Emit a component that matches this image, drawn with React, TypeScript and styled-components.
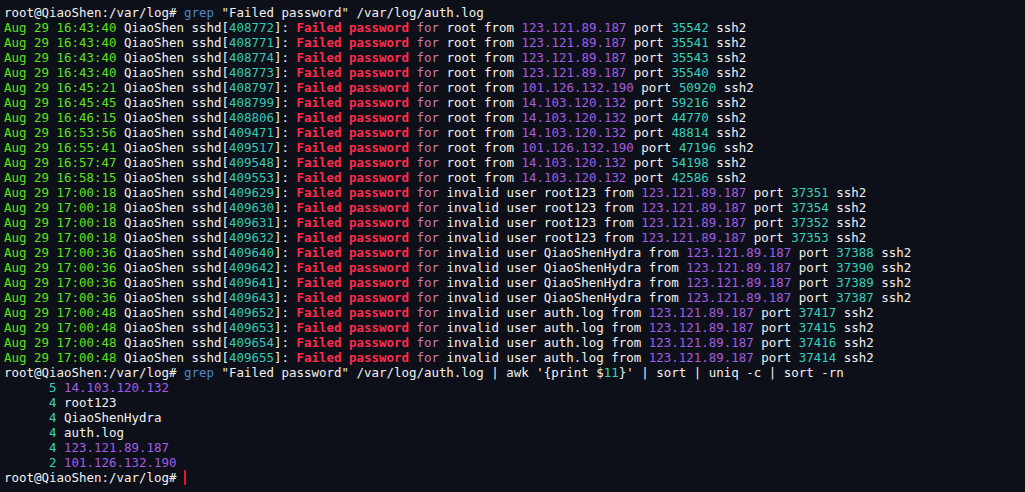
import React from "react";
import styled, { createGlobalStyle } from "styled-components";

const Global = createGlobalStyle`
  html, body { margin: 0; padding: 0; background: #0e1019; height: 100%; }
  #root { min-height: 100%; }
`;

const palette = {
  fg: "#f2f2f2",
  cmd: "#4f85c8",
  time: "#5ae21c",
  pid: "#34c8b6",
  fail: "#ff2b4c",
  kw: "#c77cae",
  ip: "#a35ce4",
  num: "#36d0bb",
} as const;

type Tone = keyof typeof palette;

const Terminal = styled.div`
  box-sizing: border-box;
  width: 1025px;
  height: 492px;
  overflow: hidden;
  background: #0e1019;
  padding: 5px 4px;
  font-family: "DejaVu Sans Mono", "Liberation Mono", monospace;
  font-size: 12.46px;
  color: ${palette.fg};
  display: flex;
  flex-direction: column;
`;

const Line = styled.div`
  height: 15px;
  line-height: 15px;
  white-space: pre;
  display: flex;
  align-items: center;
`;

const Seg = styled.span<{ $t?: Tone; $bold?: boolean }>`
  color: ${(p) => palette[p.$t ?? "fg"]};
  font-weight: ${(p) => (p.$bold ? 700 : 400)};
`;

const Cursor = styled.span`
  display: inline-block;
  width: 2px;
  height: 15px;
  background: #e8122a;
`;

type Row = [string, string, string, string, string];

const rows: Row[] = [
  ["16:43:40", "408772", "root", "123.121.89.187", "35542"],
  ["16:43:40", "408771", "root", "123.121.89.187", "35541"],
  ["16:43:40", "408774", "root", "123.121.89.187", "35543"],
  ["16:43:40", "408773", "root", "123.121.89.187", "35540"],
  ["16:45:21", "408797", "root", "101.126.132.190", "50920"],
  ["16:45:45", "408799", "root", "14.103.120.132", "59216"],
  ["16:46:15", "408806", "root", "14.103.120.132", "44770"],
  ["16:53:56", "409471", "root", "14.103.120.132", "48814"],
  ["16:55:41", "409517", "root", "101.126.132.190", "47196"],
  ["16:57:47", "409548", "root", "14.103.120.132", "54198"],
  ["16:58:15", "409553", "root", "14.103.120.132", "42586"],
  ["17:00:18", "409629", "invalid user root123", "123.121.89.187", "37351"],
  ["17:00:18", "409630", "invalid user root123", "123.121.89.187", "37354"],
  ["17:00:18", "409631", "invalid user root123", "123.121.89.187", "37352"],
  ["17:00:18", "409632", "invalid user root123", "123.121.89.187", "37353"],
  ["17:00:36", "409640", "invalid user QiaoShenHydra", "123.121.89.187", "37388"],
  ["17:00:36", "409642", "invalid user QiaoShenHydra", "123.121.89.187", "37390"],
  ["17:00:36", "409641", "invalid user QiaoShenHydra", "123.121.89.187", "37389"],
  ["17:00:36", "409643", "invalid user QiaoShenHydra", "123.121.89.187", "37387"],
  ["17:00:48", "409652", "invalid user auth.log", "123.121.89.187", "37417"],
  ["17:00:48", "409653", "invalid user auth.log", "123.121.89.187", "37415"],
  ["17:00:48", "409654", "invalid user auth.log", "123.121.89.187", "37416"],
  ["17:00:48", "409655", "invalid user auth.log", "123.121.89.187", "37414"],
];

const counts: { n: string; v: string; ip: boolean }[] = [
  { n: "5", v: "14.103.120.132", ip: true },
  { n: "4", v: "root123", ip: false },
  { n: "4", v: "QiaoShenHydra", ip: false },
  { n: "4", v: "auth.log", ip: false },
  { n: "4", v: "123.121.89.187", ip: true },
  { n: "2", v: "101.126.132.190", ip: true },
];

const Prompt = () => <Seg>root@QiaoShen:/var/log# </Seg>;

export default function App() {
  return (
    <>
      <Global />
      <Terminal>
        <Line>
          <Prompt />
          <Seg $t="cmd">grep</Seg>
          <Seg> "Failed password" /var/log/auth.log</Seg>
        </Line>
        {rows.map(([time, pid, user, ip, port], i) => (
          <Line key={i}>
            <Seg $t="time">Aug 29 {time}</Seg>
            <Seg> QiaoShen sshd[</Seg>
            <Seg $t="pid">{pid}</Seg>
            <Seg>]: </Seg>
            <Seg $t="fail" $bold>
              Failed password
            </Seg>
            <Seg> </Seg>
            <Seg $t="kw">for</Seg>
            <Seg> {user} from </Seg>
            <Seg $t="ip">{ip}</Seg>
            <Seg> port </Seg>
            <Seg $t="num">{port}</Seg>
            <Seg> ssh2</Seg>
          </Line>
        ))}
        <Line>
          <Prompt />
          <Seg $t="cmd">grep</Seg>
          <Seg> "Failed password" /var/log/auth.log | awk '{"{"}print $</Seg>
          <Seg $t="num">11</Seg>
          <Seg>{"}"}' | sort | uniq -c | sort -rn</Seg>
        </Line>
        {counts.map((c, i) => (
          <Line key={i}>
            <Seg>      </Seg>
            <Seg $t="num">{c.n}</Seg>
            <Seg> </Seg>
            <Seg $t={c.ip ? "ip" : "fg"}>{c.v}</Seg>
          </Line>
        ))}
        <Line>
          <Prompt />
          <Cursor />
        </Line>
      </Terminal>
    </>
  );
}
